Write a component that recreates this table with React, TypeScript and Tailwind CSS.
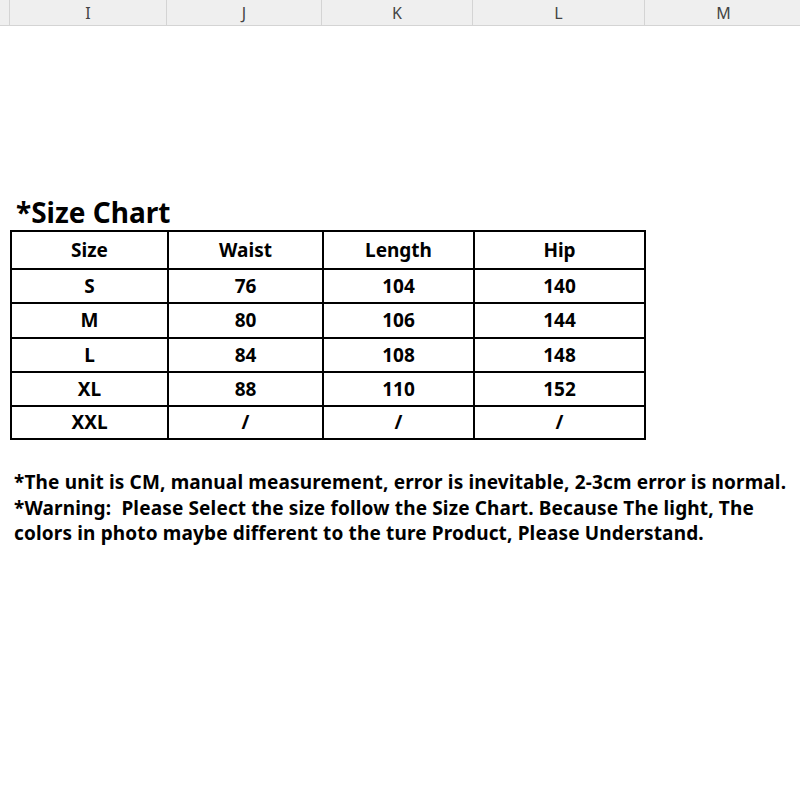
const cols = ['I', 'J', 'K', 'L', 'M'];

const rows = [
  { h: 'h-[34px]', cells: ['S', '76', '104', '140'] },
  { h: 'h-[35px]', cells: ['M', '80', '106', '144'] },
  { h: 'h-[34px]', cells: ['L', '84', '108', '148'] },
  { h: 'h-[34px]', cells: ['XL', '88', '110', '152'] },
  { h: 'h-[33px]', cells: ['XXL', '/', '/', '/'] },
];

export default function App() {
  return (
    <div className="w-[800px] h-[800px] bg-white overflow-hidden font-['Noto_Sans','Open_Sans',sans-serif]">
      {/* sheet column header */}
      <div className="grid grid-cols-[10px_157px_155px_151px_172px_158px] h-[26px] bg-[#efefef] border-b border-[#d4d4d4]">
        <div className="border-r border-[#d4d4d4]" />
        {cols.map((c) => (
          <div key={c} className="flex items-center justify-center border-r border-[#d4d4d4] text-[16px] text-[#444]">
            {c}
          </div>
        ))}
      </div>

      <div className="pt-[168px] pl-[16px] text-[28px] font-bold leading-[36px] text-black">*Size Chart</div>

      <table className="ml-[10px] w-[636px] border-collapse table-fixed text-[19px] font-bold text-black">
        <colgroup>
          <col className="w-[157px]" />
          <col className="w-[155px]" />
          <col className="w-[151px]" />
          <col className="w-[171px]" />
        </colgroup>
        <thead>
          <tr className="h-[38px]">
            {['Size', 'Waist', 'Length', 'Hip'].map((h) => (
              <th key={h} className="border-2 border-black p-0 text-center font-bold">
                {h}
              </th>
            ))}
          </tr>
        </thead>
        <tbody>
          {rows.map((r) => (
            <tr key={r.cells[0]} className={r.h}>
              {r.cells.map((v, j) => (
                <td key={j} className="border-2 border-black p-0 text-center">
                  {v}
                </td>
              ))}
            </tr>
          ))}
        </tbody>
      </table>

      <div className="mt-[30px] pl-[14px] text-[19px] font-bold leading-[25.5px] tracking-[0.15px] text-black whitespace-nowrap">
        <p>*The unit is CM, manual measurement, error is inevitable, 2-3cm error is normal.</p>
        <p>*Warning:&nbsp; Please Select the size follow the Size Chart. Because The light, The</p>
        <p>colors in photo maybe different to the ture Product, Please Understand.</p>
      </div>
    </div>
  );
}
